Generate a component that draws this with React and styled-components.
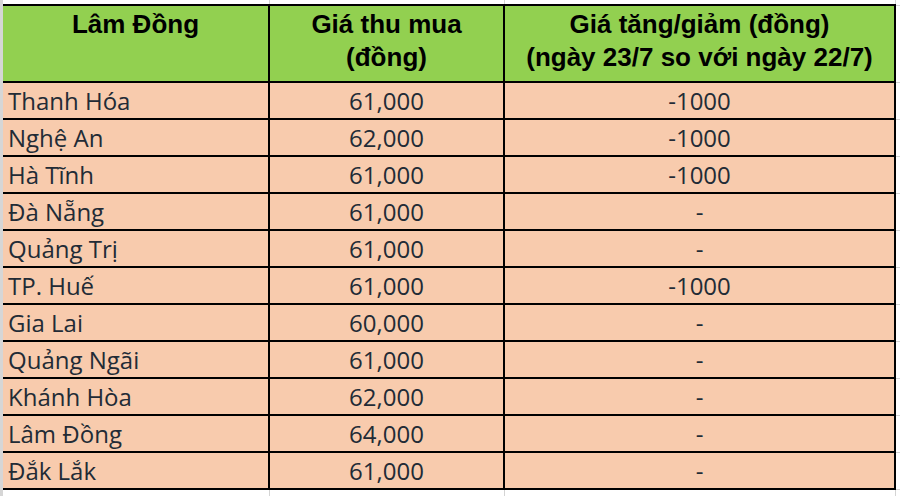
import styled, { createGlobalStyle } from 'styled-components';

const GlobalStyle = createGlobalStyle`
  html, body {
    margin: 0;
    padding: 0;
    background: #ffffff;
  }
`;

const rows = [
  { name: 'Thanh Hóa', price: '61,000', change: '-1000' },
  { name: 'Nghệ An', price: '62,000', change: '-1000' },
  { name: 'Hà Tĩnh', price: '61,000', change: '-1000' },
  { name: 'Đà Nẵng', price: '61,000', change: '-' },
  { name: 'Quảng Trị', price: '61,000', change: '-' },
  { name: 'TP. Huế', price: '61,000', change: '-1000' },
  { name: 'Gia Lai', price: '60,000', change: '-' },
  { name: 'Quảng Ngãi', price: '61,000', change: '-' },
  { name: 'Khánh Hòa', price: '62,000', change: '-' },
  { name: 'Lâm Đồng', price: '64,000', change: '-' },
  { name: 'Đắk Lắk', price: '61,000', change: '-' },
];

export default function App() {
  return (
    <>
      <GlobalStyle />
      <Sheet>
        <Table>
          <colgroup>
            <col style={{ width: 266 }} />
            <col style={{ width: 235 }} />
            <col style={{ width: 391 }} />
            <col style={{ width: 5 }} />
          </colgroup>
          <tbody>
            <SpacerRow $h={5}>
              <GridCell />
              <GridCell />
              <GridCell />
              <GridCell />
            </SpacerRow>
            <HeaderRow>
              <HeadCell>Lâm Đồng</HeadCell>
              <HeadCell>
                Giá thu mua
                <br />
                (đồng)
              </HeadCell>
              <HeadCell>
                Giá tăng/giảm (đồng)
                <br />
                (ngày 23/7 so với ngày 22/7)
              </HeadCell>
              <GridCell />
            </HeaderRow>
            {rows.map((r) => (
              <BodyRow key={r.name}>
                <NameCell>{r.name}</NameCell>
                <ValueCell>{r.price}</ValueCell>
                <ValueCell>{r.change}</ValueCell>
                <GridCell />
              </BodyRow>
            ))}
            <SpacerRow $h={7}>
              <GridCell />
              <GridCell />
              <GridCell />
              <GridCell />
            </SpacerRow>
          </tbody>
        </Table>
      </Sheet>
    </>
  );
}

const Sheet = styled.div`
  display: flex;
  width: 900px;
  height: 496px;
  overflow: hidden;
  box-sizing: border-box;
  border-left: 3px solid #d6d6d6;
  background: #ffffff;
`;

const Table = styled.table`
  border-collapse: collapse;
  table-layout: fixed;
  width: 897px;
  align-self: flex-start;
`;

const SpacerRow = styled.tr`
  height: ${(p) => p.$h}px;
`;

const GridCell = styled.td`
  padding: 0;
  border-right: 1px solid #d4d4d4;
  border-bottom: 1px solid #d4d4d4;
  background: #ffffff;
`;

const HeaderRow = styled.tr`
  height: 77px;
`;

const HeadCell = styled.th`
  padding: 2px 4px 0;
  vertical-align: top;
  text-align: center;
  background: #92d050;
  color: #000000;
  font-family: 'Liberation Sans', Arial, sans-serif;
  font-weight: 700;
  font-size: 26px;
  line-height: 33px;
  white-space: nowrap;
  border: 2px solid #000000;
  border-left: none;
`;

const BodyRow = styled.tr`
  height: 37px;
`;

const BaseCell = styled.td`
  padding: 0 5px;
  background: #f8cbad;
  color: #222b36;
  font-family: 'Open Sans', 'Noto Sans', sans-serif;
  font-size: 24px;
  line-height: 34px;
  vertical-align: middle;
  white-space: nowrap;
  border: 2px solid #000000;
  border-left: none;
`;

const NameCell = styled(BaseCell)`
  text-align: left;
`;

const ValueCell = styled(BaseCell)`
  text-align: center;
`;
